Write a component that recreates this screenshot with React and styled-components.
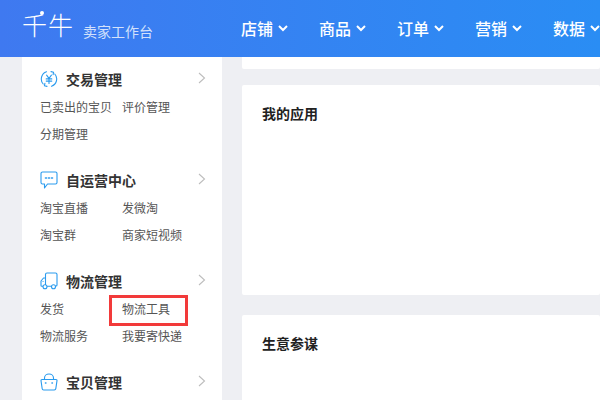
import React from 'react';
import styled, { createGlobalStyle } from 'styled-components';

const GlobalStyle = createGlobalStyle`
  html, body {
    margin: 0;
    height: 100%;
    overflow: hidden;
    background: #eeeff3;
    font-family: "Noto Sans CJK SC", "Liberation Sans", sans-serif;
  }
`;

const Page = styled.div`
  width: 600px;
  height: 400px;
  overflow: hidden;
  display: flex;
  flex-direction: column;
`;

const Header = styled.header`
  flex: 0 0 57px;
  display: flex;
  align-items: center;
  padding-left: 22px;
  background: linear-gradient(90deg, #3f79f0 0%, #2a8df4 100%);
  color: #fff;
  white-space: nowrap;
`;

const Brand = styled.div`
  flex: 0 0 219px;
  display: flex;
  align-items: center;
`;

const Logo = styled.span`
  position: relative;
  margin-bottom: 9px;
  font-size: 25px;
  line-height: 30px;
  font-weight: 300;
  letter-spacing: 1px;

  &::after {
    content: "";
    position: absolute;
    left: 18px;
    top: 2px;
    width: 4px;
    height: 4px;
    border-radius: 50%;
    background: #fff;
  }
`;

const Tagline = styled.span`
  margin: 4px 0 0 9px;
  font-size: 14px;
  line-height: 18px;
  color: #d3e1fb;
`;

const Nav = styled.nav`
  display: flex;
  gap: 31px;
  margin-bottom: 2px;
`;

const NavItem = styled.span`
  display: flex;
  align-items: center;
  gap: 5px;
  font-size: 16px;
  line-height: 24px;
  font-weight: 500;
`;

const ChevronIcon = styled.svg`
  width: 10px;
  height: 7px;
  margin-top: 2px;
  fill: none;
  stroke: #fff;
  stroke-width: 2;
`;

const Body = styled.div`
  flex: 1;
  display: flex;
  gap: 20px;
  padding-left: 22px;
  min-height: 0;
`;

const Sidebar = styled.aside`
  flex: 0 0 200px;
  padding: 12px 16px 0 18px;
  box-sizing: border-box;
  background: #fff;
`;

const Section = styled.section`
  height: 101px;
`;

const SectionHead = styled.div`
  display: flex;
  align-items: center;
  height: 20px;
`;

const SectionIcon = styled.svg`
  flex: 0 0 18px;
  width: 18px;
  height: 18px;
  margin-right: 8px;
  fill: none;
  stroke: #2a9bee;
  stroke-width: 1.1;
  stroke-linecap: round;
  stroke-linejoin: round;
`;

const SectionTitle = styled.h3`
  flex: 1;
  margin: 0;
  font-size: 14px;
  line-height: 20px;
  font-weight: 700;
  color: #333;
`;

const Arrow = styled.svg`
  width: 8px;
  height: 12px;
  margin-top: -2px;
  fill: none;
  stroke: #bdbdbd;
  stroke-width: 1.1;
`;

const Links = styled.div`
  display: grid;
  grid-template-columns: 82px 82px;
  grid-auto-rows: 27px;
  margin-top: 4px;
`;

const LinkItem = styled.a`
  position: relative;
  font-size: 12px;
  line-height: 27px;
  color: #555;
  white-space: nowrap;

  ${({ $marked }) => $marked && `
    &::after {
      content: "";
      position: absolute;
      left: -13px;
      top: 0;
      width: 73px;
      height: 25px;
      border: 3px solid #f23a3a;
    }
  `}
`;

const Main = styled.main`
  flex: 1;
  display: flex;
  flex-direction: column;
  gap: 16px;
  min-width: 0;
`;

const TopStrip = styled.div`
  flex: 0 0 12px;
  background: #fff;
  border-radius: 0 0 2px 2px;
`;

const Panel = styled.section`
  flex: 0 0 ${({ $height }) => $height}px;
  padding: 19px 20px;
  box-sizing: border-box;
  background: #fff;
  border-radius: 2px;
  margin-bottom: ${({ $after }) => $after || 0}px;
`;

const PanelTitle = styled.h2`
  margin: 0;
  font-size: 14px;
  line-height: 18px;
  font-weight: 700;
  color: #222;
`;

const Chevron = () => (
  <ChevronIcon viewBox="0 0 10 7">
    <path d="M1 1l4 4 4-4" />
  </ChevronIcon>
);

const YenIcon = () => (
  <SectionIcon viewBox="0 0 18 18">
    <path d="M3.2 14A7.6 7.6 0 0 1 6.5 1.8" />
    <path d="M14.8 4a7.6 7.6 0 0 1-3.3 12.2" />
    <path d="M11 1.6l2.6.6-.5 2.400M7 16.400l-2.600-.6.5-2.400" />
    <path d="M6.600 5.200L9 8.400l2.400-3.200M6.200 8.900h5.600M6.200 11.100h5.600M9 8.400v5" />
  </SectionIcon>
);

const ChatIcon = () => (
  <SectionIcon viewBox="0 0 18 18">
    <path d="M2.500 1h13A1.500 1.500 0 0 1 17 2.500v9a1.500 1.500 0 0 1-1.500 1.500H7.500L4.500 17v-4H2.500A1.500 1.500 0 0 1 1 11.500v-9A1.500 1.500 0 0 1 2.500 1z" />
    <path d="M5.500 7h1M8.500 7h1M11.500 7h1" strokeWidth="1.6" />
  </SectionIcon>
);

const TruckIcon = () => (
  <SectionIcon viewBox="0 0 18 18">
    <path d="M5.500 12.500V2.500A1.500 1.500 0 0 1 7 1h8.500A1.500 1.500 0 0 1 17 2.500v10.500a1 1 0 0 1-1 1h-.2" />
    <path d="M5.500 6H3.500L1 9v4.500a.8.8 0 0 0 .8.8h.8" />
    <path d="M7.500 14.200h3.800" />
    <circle cx="5" cy="14.800" r="2" />
    <circle cx="13.500" cy="14.800" r="2" />
    <path d="M3 9.500h.1" />
  </SectionIcon>
);

const BagIcon = () => (
  <SectionIcon viewBox="0 0 18 18">
    <path d="M2 6.500h14a1 1 0 0 1 1 1.200l-1.200 8A1.500 1.500 0 0 1 14.300 17H3.700a1.500 1.500 0 0 1-1.500-1.300L1 7.700a1 1 0 0 1 1-1.200z" />
    <path d="M4.500 6.500V5a4.500 4 0 0 1 9 0v1.500" />
    <path d="M5.500 10h.4M12 10h.4" strokeWidth="1.6" />
  </SectionIcon>
);

const navItems = ['店铺', '商品', '订单', '营销', '数据'];

const sections = [
  { title: '交易管理', Icon: YenIcon, links: ['已卖出的宝贝', '评价管理', '分期管理'] },
  { title: '自运营中心', Icon: ChatIcon, links: ['淘宝直播', '发微淘', '淘宝群', '商家短视频'] },
  { title: '物流管理', Icon: TruckIcon, links: ['发货', '物流工具', '物流服务', '我要寄快递'], marked: '物流工具' },
  { title: '宝贝管理', Icon: BagIcon, links: [] },
];

const App = () => {
  return (
    <Page>
      <GlobalStyle />
      <Header>
        <Brand>
          <Logo>千牛</Logo>
          <Tagline>卖家工作台</Tagline>
        </Brand>
        <Nav>
          {navItems.map(item => (
            <NavItem key={item}>
              {item}
              <Chevron />
            </NavItem>
          ))}
        </Nav>
      </Header>
      <Body>
        <Sidebar>
          {sections.map(({ title, Icon, links, marked }) => (
            <Section key={title}>
              <SectionHead>
                <Icon />
                <SectionTitle>{title}</SectionTitle>
                <Arrow viewBox="0 0 8 12">
                  <path d="M1 1l5.500 5-5.500 5" />
                </Arrow>
              </SectionHead>
              <Links>
                {links.map(link => (
                  <LinkItem key={link} $marked={link === marked}>{link}</LinkItem>
                ))}
              </Links>
            </Section>
          ))}
        </Sidebar>
        <Main>
          <TopStrip />
          <Panel $height={210} $after={4}>
            <PanelTitle>我的应用</PanelTitle>
          </Panel>
          <Panel $height={210}>
            <PanelTitle>生意参谋</PanelTitle>
          </Panel>
        </Main>
      </Body>
    </Page>
  );
};

export default App;
